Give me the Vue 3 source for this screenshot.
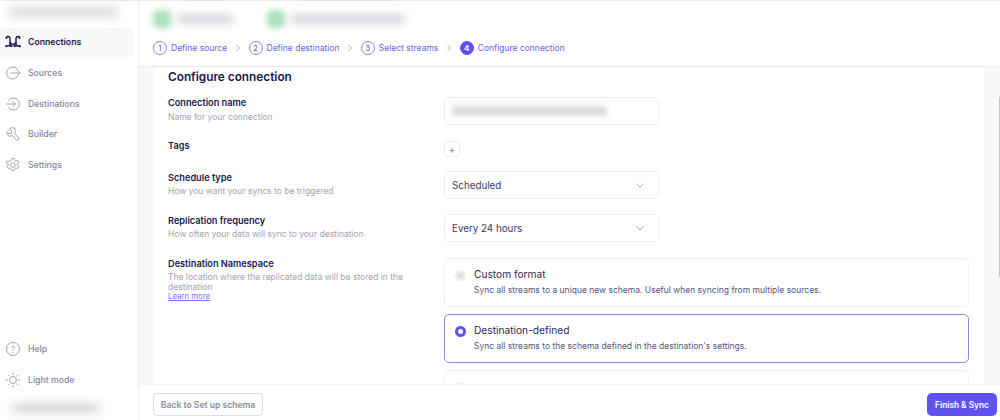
<template>
  <div class="app">
    <aside class="sidebar">
      <div class="blur-logo"></div>
      <nav class="nav">
        <a v-for="item in navTop" :key="item.label" :class="['nav-item', { active: item.active }]">
          <svg viewBox="0 0 16 16" class="nav-icon" v-html="item.icon"></svg>
          <span>{{ item.label }}</span>
        </a>
      </nav>
      <nav class="nav nav-bottom">
        <a v-for="item in navBottom" :key="item.label" class="nav-item">
          <svg viewBox="0 0 16 16" class="nav-icon" v-html="item.icon"></svg>
          <span>{{ item.label }}</span>
        </a>
      </nav>
      <div class="blur-user"></div>
    </aside>

    <main class="main">
      <header class="header">
        <div class="crumbs">
          <div class="blur-dot"></div>
          <div class="blur-text short"></div>
          <div class="blur-dot second"></div>
          <div class="blur-text long"></div>
        </div>
        <div class="steps">
          <template v-for="(step, i) in steps" :key="step">
            <span :class="['step-num', { current: i === 3 }]">{{ i + 1 }}</span>
            <span class="step-label">{{ step }}</span>
            <svg v-if="i < 3" class="step-arrow" viewBox="0 0 8 8"><path d="M2.5 1l3 3-3 3" /></svg>
          </template>
        </div>
      </header>

      <div class="content">
        <section class="card">
          <h2>Configure connection</h2>

          <div class="row row-name">
            <div class="label">
              <h3>Connection name</h3>
              <p>Name for your connection</p>
            </div>
            <div class="input"><div class="blur-input"></div></div>
          </div>

          <div class="row row-tags">
            <div class="label"><h3>Tags</h3></div>
            <button class="plus" type="button">+</button>
          </div>

          <div class="row row-select">
            <div class="label">
              <h3>Schedule type</h3>
              <p>How you want your syncs to be triggered</p>
            </div>
            <div class="input select">
              Scheduled
              <svg viewBox="0 0 10 10"><path d="M1.5 3.5L5 7l3.5-3.5" /></svg>
            </div>
          </div>

          <div class="row row-select">
            <div class="label">
              <h3>Replication frequency</h3>
              <p>How often your data will sync to your destination</p>
            </div>
            <div class="input select">
              Every 24 hours
              <svg viewBox="0 0 10 10"><path d="M1.5 3.5L5 7l3.5-3.5" /></svg>
            </div>
          </div>

          <div class="row row-ns">
            <div class="label">
              <h3>Destination Namespace</h3>
              <p>The location where the replicated data will be stored in the destination</p>
              <a class="learn">Learn more</a>
            </div>
            <div class="options">
              <div v-for="opt in options" :key="opt.title" :class="['option', { selected: opt.selected }]">
                <span class="radio"></span>
                <div>
                  <div class="opt-title">{{ opt.title }}</div>
                  <div class="opt-desc">{{ opt.desc }}</div>
                </div>
              </div>
            </div>
          </div>
        </section>
        <div class="scrollbar"></div>
      </div>

      <footer class="footer">
        <button class="btn-back" type="button">Back to Set up schema</button>
        <button class="btn-finish" type="button">Finish &amp; Sync</button>
      </footer>
    </main>
  </div>
</template>

<script setup>
const navTop = [
  {
    label: "Connections",
    active: true,
    icon: '<g fill="none" stroke="#1a194d" stroke-width="1.4" stroke-linecap="round"><path d="M1.500 3.500C1.500 2 5 2 5 4.500V10c0 1.500-1 2-2.500 2H1"/><path d="M14.500 3.500C14.500 2 11 2 11 4.500V10c0 1.500 1 2 2.500 2H15"/><path d="M5 8.500c1 1.500 1.500 2 3 2s2-.5 3-2"/><path d="M5 12h1.500M9.500 12H11"/></g><g fill="#1a194d"><circle cx="1.500" cy="4" r="1.100"/><circle cx="14.500" cy="4" r="1.100"/><circle cx="1.200" cy="12.200" r="1"/><circle cx="14.800" cy="12.200" r="1"/><circle cx="6.500" cy="12.200" r="1"/><circle cx="9.500" cy="12.200" r="1"/></g>',
  },
  {
    label: "Sources",
    icon: '<g fill="none" stroke="#a3a3b3" stroke-width="1" stroke-linecap="round" stroke-linejoin="round"><path d="M12.500 4.500A6 6 0 1 0 12.500 11.500"/><path d="M6 8h9M12.500 5.500L15 8l-2.500 2.500"/></g>',
  },
  {
    label: "Destinations",
    icon: '<g fill="none" stroke="#a3a3b3" stroke-width="1" stroke-linecap="round" stroke-linejoin="round"><path d="M3.500 4.500A6 6 0 1 1 3.500 11.500"/><path d="M1.500 8h9M8 5.500L10.500 8 8 10.500"/></g>',
  },
  {
    label: "Builder",
    icon: '<g fill="none" stroke="#a3a3b3" stroke-width="1" stroke-linecap="round" stroke-linejoin="round"><path d="M9.500 2.200C7.500 1 5 1.800 4.300 3.300L7 5.200 6 7.700 3.300 7.500 2 5.700C1.300 7.800 2.500 10 5 10.200c1 0 1.800-.2 2.500-.7l4.500 5 2.300-1.800-4.500-5.200c.8-2 .7-4-.3-5.300z"/></g>',
  },
  {
    label: "Settings",
    icon: '<g fill="none" stroke="#a3a3b3" stroke-width="1" stroke-linejoin="round"><circle cx="8" cy="8" r="2.300"/><path d="M6.800 1.500h2.400l.4 1.800 1.300.7 1.800-.6 1.200 2.100-1.400 1.300v1.400l1.400 1.300-1.200 2.100-1.800-.6-1.300.7-.4 1.800H6.800l-.4-1.800-1.300-.7-1.800.6-1.200-2.100 1.400-1.300V7.300L1.100 6l1.200-2.100 1.800.6 1.300-.7z"/></g>',
  },
];

const navBottom = [
  {
    label: "Help",
    icon: '<g fill="none" stroke="#a3a3b3" stroke-width="1" stroke-linecap="round"><circle cx="8" cy="8" r="6.500"/><path d="M6.500 6.500c0-2 3-2 3 0 0 1.200-1.500 1.200-1.500 2.500"/><path d="M8 11.200v.1"/></g>',
  },
  {
    label: "Light mode",
    icon: '<g fill="none" stroke="#a3a3b3" stroke-width="1" stroke-linecap="round"><circle cx="8" cy="8" r="3.500"/><path d="M8 1v1.500M8 13.500V15M1 8h1.500M13.500 8H15M3 3l1 1M12 12l1 1M3 13l1-1M12 4l1-1"/></g>',
  },
];

const steps = ["Define source", "Define destination", "Select streams", "Configure connection"];

const options = [
  {
    title: "Custom format",
    desc: "Sync all streams to a unique new schema. Useful when syncing from multiple sources.",
  },
  {
    title: "Destination-defined",
    desc: "Sync all streams to the schema defined in the destination's settings.",
    selected: true,
  },
  { title: "", desc: "" },
];
</script>

<style>
html,
body {
  margin: 0;
  background: #fff;
}
</style>

<style scoped>
.app {
  display: flex;
  width: 1000px;
  height: 420px;
  overflow: hidden;
  font-family: Inter, "Liberation Sans", sans-serif;
  color: #1a194d;
  background: #fff;
  border-top: 1px solid #e8e8ed;
  box-sizing: border-box;
}
.sidebar {
  width: 139px;
  flex: none;
  display: flex;
  flex-direction: column;
  border-right: 1px solid #efeff3;
  box-sizing: border-box;
  overflow: hidden;
}
.blur-logo {
  width: 112px;
  height: 10px;
  margin: 6px 0 11px 7px;
  background: #dcdce1;
  border-radius: 6px;
  filter: blur(5px);
}
.nav {
  display: flex;
  flex-direction: column;
  gap: 2px;
}
.nav-item {
  display: flex;
  align-items: center;
  gap: 7px;
  width: 134px;
  height: 28.7px;
  padding-left: 5px;
  box-sizing: border-box;
  border-radius: 0 5px 5px 0;
  font-size: 8.700px;
  font-weight: 500;
  color: #85859a;
}
.nav-item.active {
  background: #f8f8fb;
  color: #1a194d;
  font-weight: 600;
}
.nav-icon {
  width: 16px;
  height: 16px;
  flex: none;
}
.nav-bottom {
  margin-top: auto;
}
.blur-user {
  width: 88px;
  height: 10px;
  margin: 9px 0 7px 12px;
  background: #d6d6db;
  border-radius: 6px;
  filter: blur(5px);
}
.main {
  flex: 1;
  min-width: 0;
  display: flex;
  flex-direction: column;
}
.header {
  height: 66px;
  flex: none;
  box-sizing: border-box;
  padding: 9px 0 0 14px;
  border-bottom: 1px solid #ebebf0;
}
.crumbs {
  display: flex;
  align-items: center;
  height: 18px;
}
.blur-dot {
  width: 18px;
  height: 18px;
  border-radius: 5px;
  background: #a9e0bd;
  filter: blur(3px);
}
.blur-dot.second {
  margin-left: 34px;
}
.blur-text {
  height: 8px;
  margin-left: 6px;
  background: #d0d0d6;
  border-radius: 3px;
  filter: blur(4px);
}
.blur-text.short {
  width: 56px;
}
.blur-text.long {
  width: 114px;
}
.steps {
  display: flex;
  align-items: center;
  margin-top: 12px;
  height: 16px;
  color: #6a5fe8;
  font-size: 8.500px;
}
.step-num {
  width: 12px;
  height: 12px;
  flex: none;
  margin-right: 4px;
  display: flex;
  align-items: center;
  justify-content: center;
  border: 1px solid #8f86ee;
  border-radius: 50%;
  font-size: 8px;
  box-sizing: content-box;
}
.step-num.current {
  background: #5f52f0;
  border-color: #5f52f0;
  color: #fff;
  font-weight: 600;
}
.step-arrow {
  width: 8px;
  height: 8px;
  margin: 0 6.700px;
  flex: none;
}
.step-arrow path {
  fill: none;
  stroke: #a3a3b3;
  stroke-width: 1;
}
.content {
  flex: 1;
  min-height: 0;
  position: relative;
  background: #f8f8fb;
  padding: 0 16px 0 15px;
  overflow: hidden;
}
.card {
  background: #fff;
  padding: 2px 14px 0 14px;
  height: 100%;
  box-sizing: border-box;
}
.card h2 {
  margin: 0;
  font-size: 11.800px;
  line-height: 16px;
  font-weight: 600;
}
.scrollbar {
  position: absolute;
  top: 30px;
  right: 0;
  width: 1px;
  height: 180px;
  background: #c4c4cc;
}
.row {
  display: grid;
  grid-template-columns: 276px 1fr;
}
.row-name {
  margin-top: 12px;
}
.row-name .label {
  margin-top: -1px;
}
.row-name .label p {
  margin-top: 3px;
}
.row-tags {
  margin-top: 16px;
}
.row-tags .label {
  margin-top: -2px;
}
.row-select {
  margin-top: 14px;
}
.row-select + .row-select {
  margin-top: 15px;
}
.row-ns {
  margin-top: 16px;
}
.row-ns .label {
  margin-top: -1px;
}
.label h3 {
  margin: 0;
  font-size: 9.200px;
  line-height: 13px;
  font-weight: 600;
}
.label p {
  margin: 2px 0 0;
  width: 250px;
  font-size: 8.500px;
  line-height: 10px;
  color: #a3a3b3;
}
.learn {
  display: block;
  font-size: 7.800px;
  line-height: 9px;
  color: #7a6ff0;
  text-decoration: underline;
}
.input {
  width: 215px;
  height: 28px;
  box-sizing: border-box;
  border: 1px solid #eeeef2;
  border-radius: 5px;
  padding: 0 7px;
  display: flex;
  align-items: center;
  justify-content: space-between;
  font-size: 9.800px;
  color: #3a3a62;
}
.input svg {
  width: 10px;
  height: 10px;
  margin-right: 6px;
}
.input svg path {
  fill: none;
  stroke: #a3a3b3;
  stroke-width: 1;
}
.blur-input {
  width: 155px;
  height: 10px;
  background: #dcdce0;
  border-radius: 2px;
  filter: blur(2.500px);
}
.plus {
  width: 16px;
  height: 16px;
  padding: 0;
  border: 1px solid #eeeef2;
  border-radius: 3px;
  background: #fff;
  color: #8b8ba0;
  font-family: inherit;
  font-size: 10px;
  line-height: 13px;
}
.options {
  display: flex;
  flex-direction: column;
  gap: 7px;
}
.option {
  display: flex;
  gap: 8px;
  width: 525px;
  height: 49px;
  flex: none;
  box-sizing: border-box;
  padding: 8px 10px;
  border: 1px solid #f0f0f4;
  border-radius: 5px;
}
.option.selected {
  border-color: #8f86e0;
}
.radio {
  width: 11px;
  height: 11px;
  margin-top: 3px;
  flex: none;
  box-sizing: border-box;
  border-radius: 50%;
  border: 3px solid #efeff3;
  background: #dedee4;
}
.selected .radio {
  border-color: #5f52f0;
  background: #fff;
}
.opt-title {
  font-size: 10.200px;
  line-height: 14px;
  color: #2a2a55;
}
.opt-desc {
  margin-top: 3px;
  font-size: 8.500px;
  line-height: 13px;
  color: #55557a;
}
.footer {
  height: 36px;
  flex: none;
  display: flex;
  align-items: center;
  justify-content: space-between;
  padding: 4px 3px 0 14px;
  background: #fff;
  border-top: 1px solid #f3f3f6;
  box-sizing: border-box;
}
.btn-back {
  width: 110px;
  height: 23px;
  padding: 0;
  border: 1px solid #dcdce2;
  border-radius: 4px;
  background: #fff;
  color: #8b8ba0;
  font-family: inherit;
  font-size: 8.600px;
  font-weight: 600;
}
.btn-finish {
  width: 70px;
  height: 23px;
  padding: 0;
  border: 0;
  border-radius: 5px;
  background: #5f52f0;
  color: #fff;
  font-family: inherit;
  font-size: 8.300px;
  font-weight: 600;
}
</style>
